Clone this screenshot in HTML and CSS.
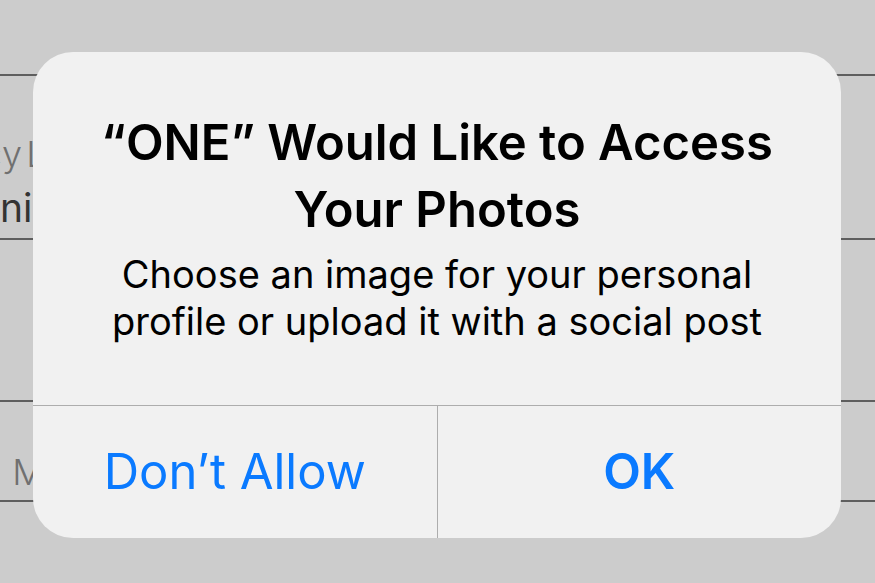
FILE: index.html
```html
<!DOCTYPE html>
<html>
<head>
<meta charset="utf-8">
<link rel="stylesheet" href="styles.css">
</head>
<body>
<div class="form">
  <div class="row row-top"></div>
  <div class="row row-name">
    <div class="label label-name"><span class="pre pre-label">Privac</span>y Level</div>
    <div class="value"><span class="pre pre-value">Roma</span>ni</div>
  </div>
  <div class="row row-empty"></div>
  <div class="row row-mail">
    <div class="label label-m"><span class="pre pre-m">Contact No.</span> Mobile</div>
  </div>
</div>
<div class="alert">
  <div class="alert-body">
    <div class="alert-title">“ONE” Would Like to Access Your Photos</div>
    <div class="alert-message">Choose an image for your personal profile or upload it with a social post</div>
  </div>
  <div class="alert-actions">
    <div class="alert-btn">Don’t Allow</div>
    <div class="alert-btn alert-btn-strong">OK</div>
  </div>
</div>
</body>
</html>
```
FILE: styles.css
```css
html, body {
  margin: 0;
  padding: 0;
}
body {
  width: 875px;
  height: 583px;
  overflow: hidden;
  background: #cccccc;
  font-family: Inter, "Open Sans", "Liberation Sans", sans-serif;
  position: relative;
}
.form {
  display: flex;
  flex-direction: column;
}
.row {
  border-bottom: 2px solid #5e5e5e;
}
.row-top {
  height: 74px;
}
.row-name {
  height: 162px;
  display: flex;
  flex-direction: column;
}
.label {
  font-size: 36px;
  font-weight: 300;
  color: #707070;
  margin-top: 56px;
  line-height: 44px;
  white-space: nowrap;
}
.label-name {
  word-spacing: -6px;
}
.pre {
  display: inline-block;
  width: 300px;
  text-align: right;
  word-spacing: normal;
}
.pre-label {
  margin-left: -298px;
}
.pre-value {
  margin-left: -300px;
}
.pre-m {
  margin-left: -298px;
}
.value {
  font-size: 39px;
  font-weight: 400;
  color: #333333;
  line-height: 44px;
  margin-top: 10px;
  white-space: nowrap;
}
.row-empty {
  height: 160px;
}
.row-mail {
  height: 98px;
}
.label-m {
  margin-top: 48px;
}
.alert {
  position: absolute;
  left: 33px;
  top: 52px;
  width: 808px;
  height: 486px;
  border-radius: 40px;
  background: #f1f1f1;
  display: flex;
  flex-direction: column;
  overflow: hidden;
}
.alert-body {
  height: 354px;
  box-sizing: border-box;
  padding: 57px 30px 0;
  text-align: center;
  border-bottom: 1px solid #adadad;
}
.alert-title {
  font-size: 49px;
  font-weight: 600;
  line-height: 67px;
  color: #000;
  padding: 0 30px;
}
.alert-message {
  font-size: 38px;
  font-weight: 400;
  line-height: 47px;
  color: #000;
  margin-top: 8px;
  padding: 0 30px;
}
.alert-actions {
  flex: 1;
  display: flex;
}
.alert-btn {
  flex: 1;
  display: flex;
  align-items: center;
  justify-content: center;
  font-size: 49px;
  color: #0a7aff;
  padding-bottom: 2px;
}
.alert-btn + .alert-btn {
  border-left: 1px solid #adadad;
}
.alert-btn-strong {
  font-weight: 600;
}
```
